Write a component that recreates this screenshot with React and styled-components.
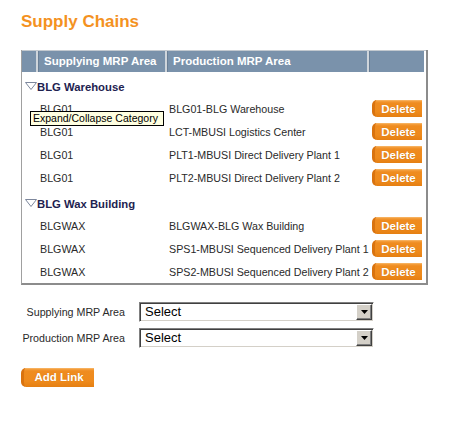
import React from "react";
import styled, { createGlobalStyle } from "styled-components";

const Global = createGlobalStyle`
  html, body { margin: 0; padding: 0; background: #fff; }
  body { font-family: "Liberation Sans", Arial, sans-serif; }
`;

const Page = styled.div`
  padding: 12px 0 40px 21px;
  width: 448px;
`;

const Title = styled.h1`
  margin: 0;
  font-size: 17px;
  line-height: 20px;
  font-weight: bold;
  color: #f4921f;
`;

const Table = styled.div`
  position: relative;
  margin-top: 18px;
  width: 404px;
  border-left: 1px solid #a0a0a0;
  border-right: 2px solid #8c8c8c;
  border-bottom: 2px solid #8c8c8c;
  background: #fff;
`;

const COLS = "14px 129px 202px 57px";

const HeaderRow = styled.div`
  display: grid;
  grid-template-columns: ${COLS};
  height: 22px;
  border-top: 1px solid #c3c9cf;
  box-sizing: border-box;
`;

const HeadCell = styled.div`
  background: #7a92ab;
  border-left: ${(p) => (p.$first ? "0" : "2px solid #cfd5db")};
  box-shadow: ${(p) => (p.$first ? "none" : "inset 1px 0 0 #6a7f96")};
  color: #fff;
  font-weight: bold;
  font-size: 11.5px;
  line-height: 21px;
  padding-left: ${(p) => (p.$first ? "0" : "6px")};
  white-space: nowrap;
  overflow: hidden;
`;

const Body = styled.div`
  padding-bottom: 0;
`;

const GroupRow = styled.div`
  display: flex;
  align-items: center;
  height: 20px;
  padding: 5px 0 0 3px;
  color: #1e2250;
  font-weight: bold;
  font-size: 11.3px;
`;

const Tri = styled.svg`
  width: 12px;
  height: 8px;
  margin-top: -3px;
  flex: none;
`;

const DataRow = styled.div`
  display: grid;
  grid-template-columns: ${COLS};
  height: 23px;
  align-items: center;
  font-size: 10.7px;
  color: #2a2a2a;
`;

const Cell = styled.div`
  padding-left: 4px;
  white-space: nowrap;
`;

const ButtonCell = styled.div`
  padding-left: 5px;
  display: flex;
  align-items: center;
`;

const OrangeButton = styled.button`
  box-sizing: border-box;
  height: ${(p) => p.$h || 17}px;
  width: ${(p) => p.$w}px;
  padding: 0;
  border: 0;
  border-left: 3px solid #d9730f;
  border-radius: 5px 0 0 5px;
  background: linear-gradient(#f9c07a 0, #f4a040 1px, #ef8c20 3px, #ee8a1c 70%, #e57f12 100%);
  color: #fff;
  font-family: "Liberation Sans", Arial, sans-serif;
  font-weight: bold;
  font-size: 11.5px;
  line-height: ${(p) => (p.$h || 17) - 1}px;
  text-align: center;
  text-shadow: 0 0 1px #c96a08;
  cursor: pointer;
`;

const Tooltip = styled.div`
  position: absolute;
  left: 8px;
  top: 61px;
  box-sizing: border-box;
  width: 134px;
  height: 15px;
  padding-left: 2px;
  background: #ffffe1;
  border: 1px solid #000;
  font-size: 10.5px;
  line-height: 13px;
  color: #000;
  white-space: nowrap;
`;

const Form = styled.div`
  display: grid;
  grid-template-columns: 104px 235px;
  column-gap: 14px;
  row-gap: 6px;
  margin-top: 17px;
  align-items: center;
`;

const Label = styled.div`
  font-size: 10.7px;
  color: #2a2a2a;
  text-align: right;
  white-space: nowrap;
`;

const SelectBox = styled.div`
  box-sizing: border-box;
  height: 20px;
  display: flex;
  align-items: stretch;
  border-top: 1px solid #808080;
  border-left: 1px solid #808080;
  border-bottom: 1px solid #fff;
  border-right: 1px solid #fff;
  box-shadow: inset 1px 1px 0 #404040, inset -1px -1px 0 #d4d0c8;
  background: #fff;
  padding: 2px;
`;

const SelectText = styled.div`
  flex: 1;
  font-size: 13px;
  line-height: 14px;
  color: #000;
  padding-left: 3px;
`;

const DropButton = styled.div`
  width: 16px;
  box-sizing: border-box;
  background: #d4d0c8;
  border-top: 1px solid #fff;
  border-left: 1px solid #fff;
  border-right: 1px solid #404040;
  border-bottom: 1px solid #404040;
  box-shadow: inset -1px -1px 0 #808080;
  display: flex;
  align-items: center;
  justify-content: center;
  margin: -1px -1px -1px 0;
`;

const Arrow = styled.svg`
  width: 7px;
  height: 4px;
`;

const Actions = styled.div`
  margin-top: 19px;
`;

const groups = [
  {
    name: "BLG Warehouse",
    rows: [
      ["BLG01", "BLG01-BLG Warehouse"],
      ["BLG01", "LCT-MBUSI Logistics Center"],
      ["BLG01", "PLT1-MBUSI Direct Delivery Plant 1"],
      ["BLG01", "PLT2-MBUSI Direct Delivery Plant 2"],
    ],
  },
  {
    name: "BLG Wax Building",
    rows: [
      ["BLGWAX", "BLGWAX-BLG Wax Building"],
      ["BLGWAX", "SPS1-MBUSI Sequenced Delivery Plant 1"],
      ["BLGWAX", "SPS2-MBUSI Sequenced Delivery Plant 2"],
    ],
  },
];

function Triangle() {
  return (
    <Tri viewBox="0 0 12 8">
      <polygon points="0.5,0.5 11.5,0.5 6,7.5" fill="#fff" stroke="#7d879c" strokeWidth="1" />
    </Tri>
  );
}

function Select() {
  return (
    <SelectBox>
      <SelectText>Select</SelectText>
      <DropButton>
        <Arrow viewBox="0 0 7 4">
          <polygon points="0,0 7,0 3.5,4" fill="#000" />
        </Arrow>
      </DropButton>
    </SelectBox>
  );
}

export default function App() {
  return (
    <>
      <Global />
      <Page>
        <Title>Supply Chains</Title>
        <Table>
          <HeaderRow>
            <HeadCell $first />
            <HeadCell>Supplying MRP Area</HeadCell>
            <HeadCell>Production MRP Area</HeadCell>
            <HeadCell />
          </HeaderRow>
          <Body>
            {groups.map((g) => (
              <React.Fragment key={g.name}>
                <GroupRow>
                  <Triangle />
                  <span>{g.name}</span>
                </GroupRow>
                {g.rows.map(([a, b]) => (
                  <DataRow key={b}>
                    <span />
                    <Cell>{a}</Cell>
                    <Cell>{b}</Cell>
                    <ButtonCell>
                      <OrangeButton $w={50}>Delete</OrangeButton>
                    </ButtonCell>
                  </DataRow>
                ))}
              </React.Fragment>
            ))}
          </Body>
          <Tooltip>Expand/Collapse Category</Tooltip>
        </Table>
        <Form>
          <Label>Supplying MRP Area</Label>
          <Select />
          <Label>Production MRP Area</Label>
          <Select />
        </Form>
        <Actions>
          <OrangeButton $w={73} $h={19}>Add Link</OrangeButton>
        </Actions>
      </Page>
    </>
  );
}
